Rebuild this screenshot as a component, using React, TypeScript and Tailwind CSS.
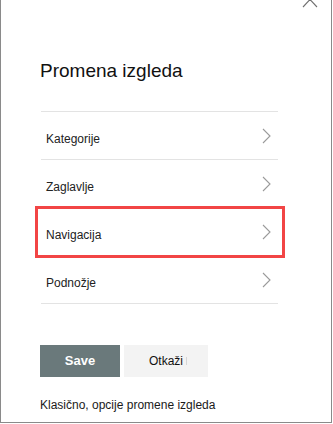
import React from 'react';

const items = ['Kategorije', 'Zaglavlje', 'Navigacija', 'Podnožje'];

function Chevron() {
  return (
    <svg width="9" height="16" viewBox="0 0 9 16" className="shrink-0">
      <path d="M1 1 L8 8 L1 15" fill="none" stroke="#9a9a9a" strokeWidth="1.1" />
    </svg>
  );
}

export default function App() {
  return (
    <div
      className="relative w-[332px] h-[423px] bg-white border-l border-r border-b border-[#8a8a8a] overflow-hidden"
      style={{ fontFamily: '"Liberation Sans", Arial, sans-serif' }}
    >
      {/* close icon, cut off at the top */}
      <svg
        width="18"
        height="8"
        viewBox="0 0 18 8"
        className="absolute right-[12px] top-0"
      >
        <path d="M2 7 L9 -0.5 L16 7" fill="none" stroke="#707070" strokeWidth="1.1" />
      </svg>

      <div className="pl-[39px] pr-[53px] pt-[60px]">
        <h1 className="text-[19px] leading-[22px] text-[#111]">Promena izgleda</h1>

        <div className="mt-[29px] border-t border-[#e3e3e3] ml-[1px]">
          {items.map((label) => (
            <div
              key={label}
              className="h-[48px] flex items-center justify-between pl-[5px] pr-[7px] border-b border-[#e3e3e3]"
            >
              <span className="text-[12px] leading-[16px] text-[#222] mt-[7px]">{label}</span>
              <Chevron />
            </div>
          ))}
        </div>

        <div className="mt-[41px] flex gap-[4px]">
          <button className="w-[80px] h-[32px] bg-[#6a797b] text-white text-[13px] font-bold">
            Save
          </button>
          <button className="relative w-[84px] h-[32px] bg-[#f3f3f3] text-[12px] text-[#111]">
            Otkaži
            <span className="absolute left-[62px] top-[12px] w-px h-[8px] bg-[#d6d6d6]" />
          </button>
        </div>

        <p className="mt-[20px] text-[12px] leading-[16px] text-[#1a1a1a] whitespace-nowrap">
          Klasično, opcije promene izgleda
        </p>
      </div>

      {/* highlight annotation */}
      <div className="absolute left-[34px] top-[206px] w-[250px] h-[52px] border-[3px] border-[#f24545]" />
    </div>
  );
}
